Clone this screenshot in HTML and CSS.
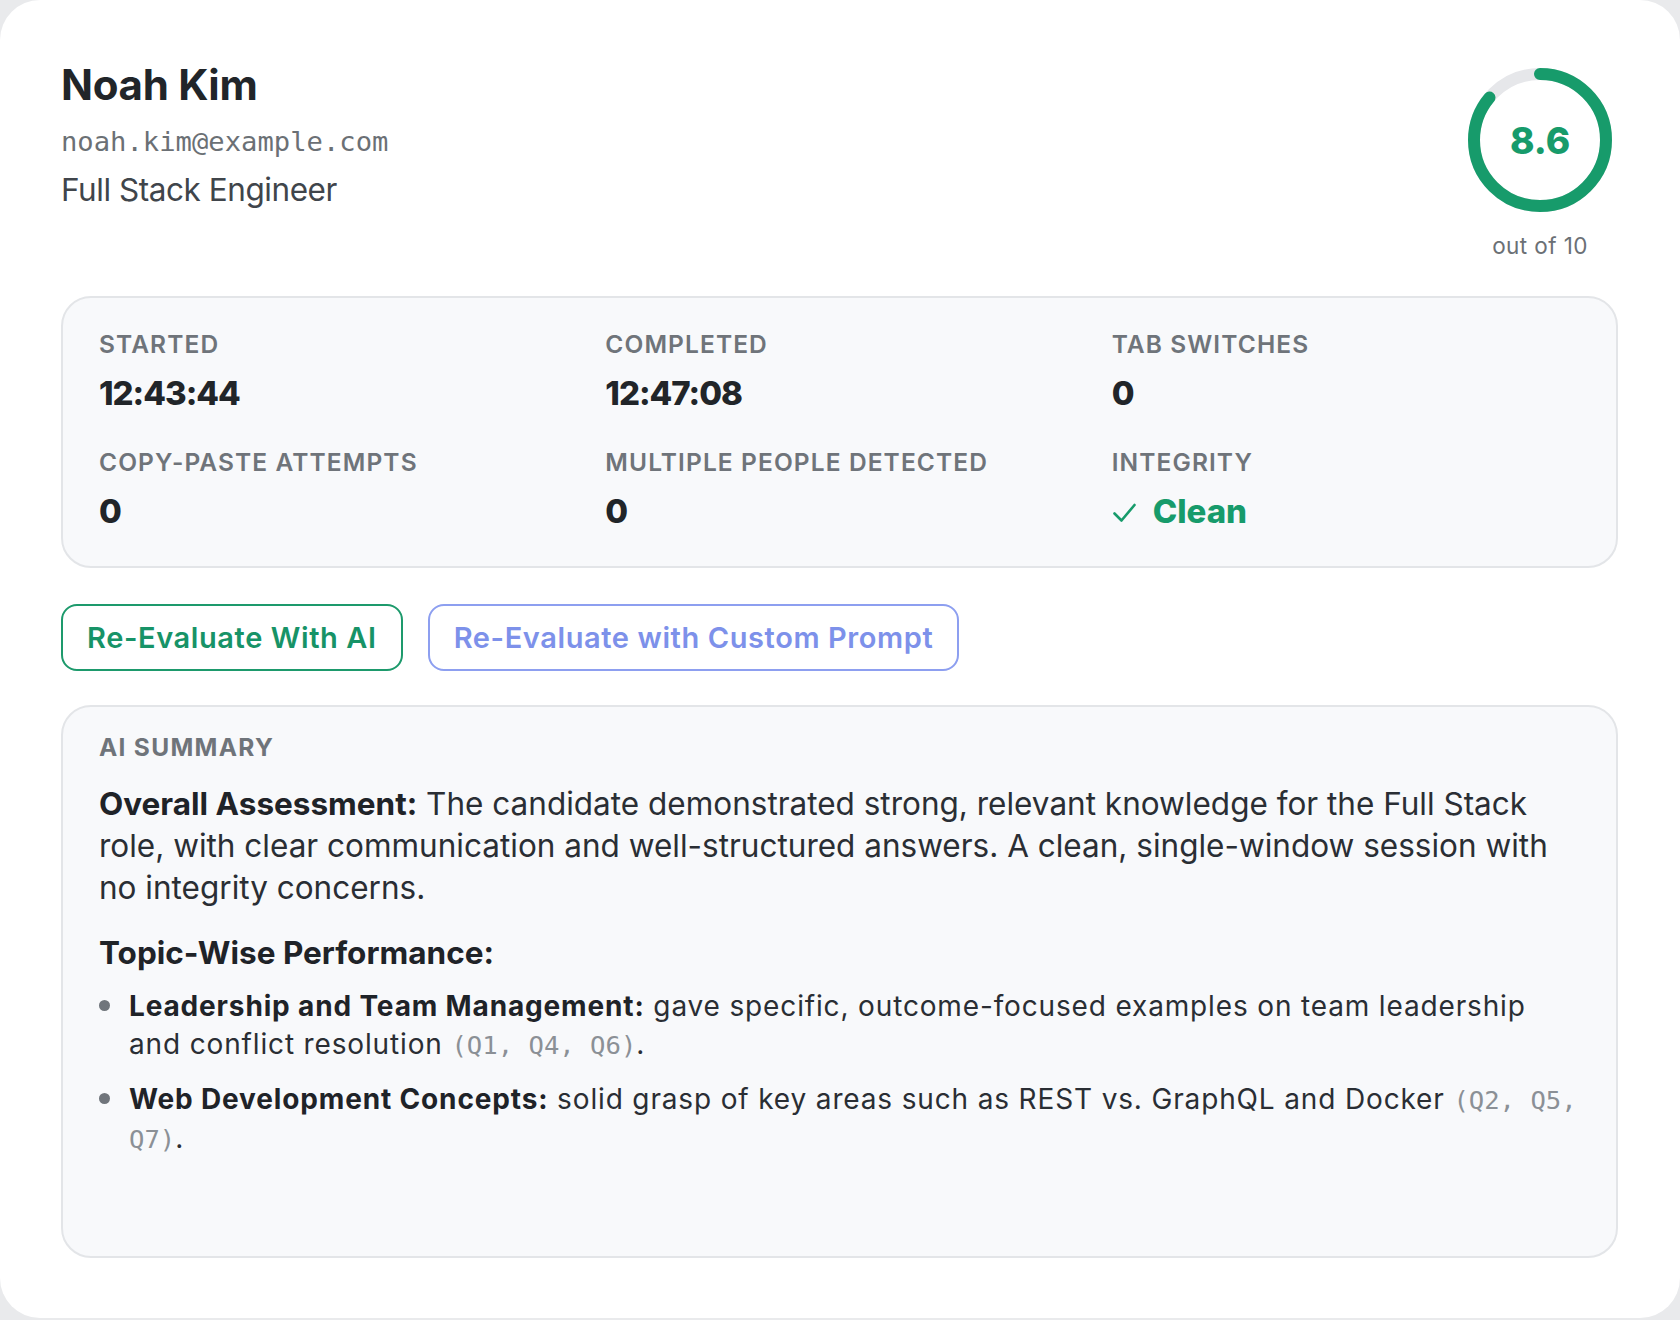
FILE: index.html
```html
<!DOCTYPE html>
<html lang="en">

<head>
    <meta charset="utf-8">
    <meta name="viewport" content="width=device-width, initial-scale=1.0">
    <title>Noah Kim - Report</title>
    <link rel="stylesheet" href="styles.css">
</head>

<body>

    <main class="card">

        <header class="top">
            <div class="person">
                <h1>Noah Kim</h1>
                <p class="email">noah.kim@example.com</p>
                <p class="role">Full Stack Engineer</p>
            </div>

            <div class="score">
                <div class="ring">
                    <svg width="144" height="144" viewBox="0 0 144 144">
                        <circle cx="72" cy="72" r="66" fill="none" stroke="#e6e7ea" stroke-width="12" />
                        <circle cx="72" cy="72" r="66" fill="none" stroke="#179b6b" stroke-width="12"
                            stroke-linecap="round" stroke-dasharray="356.6 414.7" transform="rotate(-90 72 72)" />
                    </svg>
                    <span class="score-num">8.6</span>
                </div>
                <p class="score-sub">out of 10</p>
            </div>
        </header>

        <section class="stats">
            <div class="stat">
                <p class="label">Started</p>
                <p class="value">12:43:44</p>
            </div>
            <div class="stat">
                <p class="label">Completed</p>
                <p class="value">12:47:08</p>
            </div>
            <div class="stat">
                <p class="label">Tab Switches</p>
                <p class="value">0</p>
            </div>
            <div class="stat">
                <p class="label">Copy-Paste Attempts</p>
                <p class="value">0</p>
            </div>
            <div class="stat">
                <p class="label">Multiple People Detected</p>
                <p class="value">0</p>
            </div>
            <div class="stat">
                <p class="label">Integrity</p>
                <p class="value clean">
                    <svg class="check" width="25" height="21" viewBox="0 0 25 21">
                        <polyline points="2.5,11.5 9.5,18.5 22.5,3" fill="none" stroke="#179b6b" stroke-width="2.6"
                            stroke-linecap="round" stroke-linejoin="round" />
                    </svg>Clean
                </p>
            </div>
        </section>

        <nav class="actions">
            <button class="btn btn-green">Re-Evaluate With AI</button>
            <button class="btn btn-blue">Re-Evaluate with Custom Prompt</button>
        </nav>

        <section class="summary">
            <p class="label">AI Summary</p>
            <p class="text"><b>Overall Assessment:</b> The candidate demonstrated strong, relevant knowledge for the Full Stack role, with clear communication and well-structured answers. A clean, single-window session with no integrity concerns.</p>
            <h3>Topic-Wise Performance:</h3>
            <ul>
                <li><b>Leadership and Team Management:</b> gave specific, outcome-focused examples on team leadership and conflict resolution <code>(Q1, Q4, Q6)</code>.</li>
                <li><b>Web Development Concepts:</b> solid grasp of key areas such as REST vs. GraphQL and Docker <code>(Q2, Q5, Q7)</code>.</li>
            </ul>
        </section>

    </main>

</body>

</html>
```

FILE: styles.css
```css
* {
    box-sizing: border-box;
}

body {
    margin: 0;
    background-color: #e9eaec;
    font-family: "Inter", "Noto Sans", sans-serif;
    color: #212529;
}

p,
h1,
h3,
ul {
    margin: 0;
}

.card {
    width: 1680px;
    min-height: 1318px;
    background-color: #fff;
    border-radius: 40px;
    padding: 59px 62px 60px 61px;
    display: flex;
    flex-direction: column;
}

/* header */

.top {
    display: flex;
    justify-content: space-between;
    align-items: flex-start;
}

h1 {
    font-size: 42px;
    line-height: 52px;
    font-weight: 700;
    letter-spacing: -0.3px;
    color: #212529;
}

.email {
    margin-top: 11px;
    font-family: "DejaVu Sans Mono", monospace;
    font-size: 27.2px;
    line-height: 40px;
    color: #6b7075;
}

.role {
    margin-top: 6px;
    font-size: 31.5px;
    line-height: 44px;
    letter-spacing: -0.45px;
    color: #40454b;
}

.score {
    width: 156px;
    padding-top: 9px;
    display: flex;
    flex-direction: column;
    align-items: center;
}

.ring {
    display: grid;
    place-items: center;
}

.ring svg,
.score-num {
    grid-area: 1 / 1;
}

.score-num {
    font-size: 37px;
    font-weight: 800;
    color: #179b6b;
}

.score-sub {
    margin-top: 19px;
    font-size: 22.5px;
    line-height: 30px;
    letter-spacing: 0.4px;
    color: #6b7075;
}

/* stats */

.stats {
    margin-top: 35px;
    display: grid;
    grid-template-columns: repeat(3, 1fr);
    column-gap: 38px;
    row-gap: 27px;
    padding: 28px 36px 31px;
    background-color: #f8f9fb;
    border: 2px solid #e3e5e8;
    border-radius: 30px;
}

.label {
    font-size: 24.5px;
    line-height: 36px;
    font-weight: 600;
    letter-spacing: 1.1px;
    text-transform: uppercase;
    color: #6f747a;
}

.value {
    margin-top: 7px;
    font-size: 33px;
    line-height: 48px;
    font-weight: 800;
    letter-spacing: -1px;
    color: #212529;
}

.clean {
    letter-spacing: 0;
    color: #179b6b;
}

.check {
    margin-right: 16px;
}

/* buttons */

.actions {
    margin-top: 36px;
    display: flex;
    gap: 25px;
}

.btn {
    height: 67px;
    padding: 0 24px;
    background-color: #fff;
    border-radius: 16px;
    font-family: "Inter", sans-serif;
    font-size: 29px;
    font-weight: 600;
    letter-spacing: 0.6px;
}

.btn-green {
    border: 2px solid #1d9a6c;
    color: #179367;
}

.btn-blue {
    border: 2px solid #8d9ff0;
    color: #7d91ea;
}

/* summary */

.summary {
    flex: 1;
    margin-top: 34px;
    padding: 22px 36px 36px;
    background-color: #f8f9fb;
    border: 2px solid #e3e5e8;
    border-radius: 30px;
}

.summary .label {
    font-weight: 700;
    letter-spacing: 1.3px;
}

.text {
    margin-top: 18px;
    font-size: 31.5px;
    line-height: 42px;
    color: #2a2e34;
}

.text b,
li b {
    color: #1f2328;
}

h3 {
    margin-top: 23px;
    font-size: 31.5px;
    line-height: 42px;
    font-weight: 700;
    color: #1f2328;
}

ul {
    margin-top: 13px;
    padding-left: 30px;
    list-style: none;
}

li {
    position: relative;
    font-size: 28px;
    line-height: 38px;
    letter-spacing: 0.85px;
    color: #2a2e34;
}

li + li {
    margin-top: 16px;
}

li::before {
    content: "";
    position: absolute;
    left: -30px;
    top: 13px;
    width: 11px;
    height: 11px;
    border-radius: 50%;
    background-color: #70757b;
}

code {
    font-family: "DejaVu Sans Mono", monospace;
    font-size: 25.6px;
    letter-spacing: 0;
    color: #8b9096;
}
```
